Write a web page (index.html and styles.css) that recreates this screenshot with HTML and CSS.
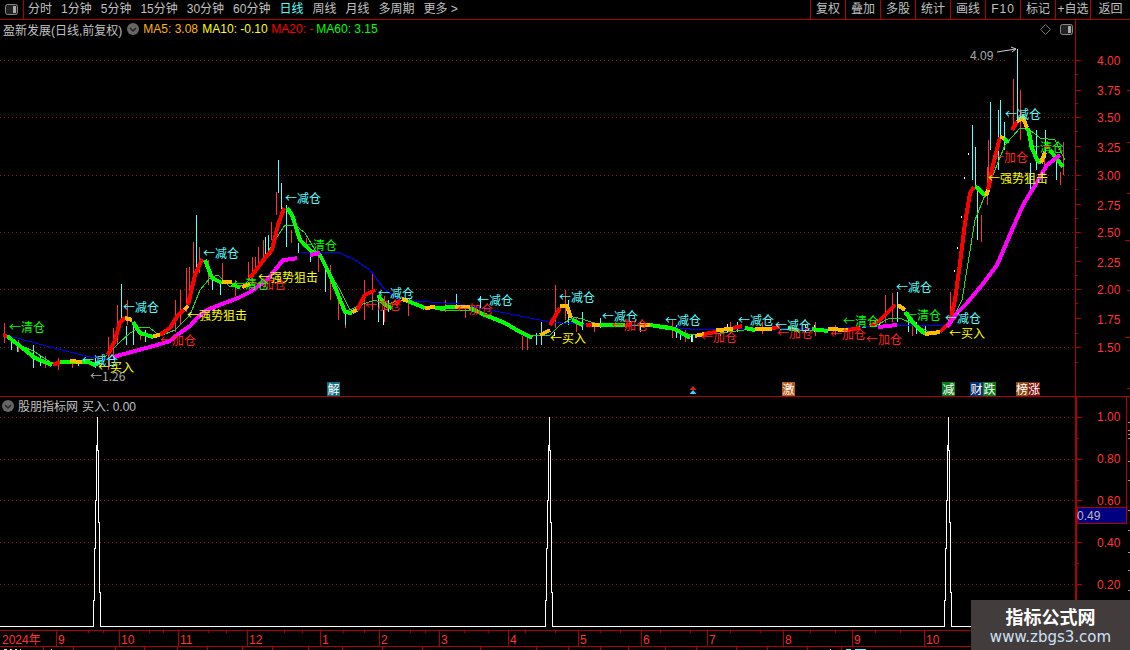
FILE: index.html
```html
<!DOCTYPE html>
<html lang="zh">
<head>
<meta charset="utf-8">
<title>盈新发展 日线</title>
<link rel="stylesheet" href="styles.css">
</head>
<body>
<div class="app">
  <header class="toolbar">
    <div class="toggle-cell">
      <svg class="panel-icon" viewBox="0 0 13 11"><rect x="0.5" y="0.5" width="12" height="10" rx="2" class="panel-frame"/><rect x="8" y="2" width="3" height="7" class="panel-fill"/></svg>
    </div>
    <nav class="periods">
      <span>分时</span><span>1分钟</span><span>5分钟</span><span>15分钟</span><span>30分钟</span><span>60分钟</span><span class="active">日线</span><span>周线</span><span>月线</span><span>多周期</span><span>更多 &gt;</span>
    </nav>
    <nav class="actions">
      <span>复权</span><span>叠加</span><span>多股</span><span>统计</span><span>画线</span><span class="spaced">F10</span><span>标记</span><span>+自选</span><span class="last">返回</span>
    </nav>
  </header>

  <section class="pane pane-main">
    <div class="pane-body">
      <div class="pane-head">
        <span class="title">盈新发展(日线,前复权)</span>
        <svg class="chevron" viewBox="0 0 12 12"><circle cx="6" cy="6" r="6" class="chev-bg"/><path d="M3 5l3 3 3-3" class="chev-mark"/></svg>
        <span class="ma ma5">MA5: 3.08</span>
        <span class="ma ma10">MA10: -0.10</span>
        <span class="ma ma20">MA20: -</span>
        <span class="ma ma60">MA60: 3.15</span>
        <span class="head-tools">
          <svg class="diamond" viewBox="0 0 11 11"><path d="M5.5 0.5l5 5-5 5-5-5z"/></svg>
          <svg class="panel-icon" viewBox="0 0 13 11"><rect x="0.5" y="0.5" width="12" height="10" rx="2" class="panel-frame"/><rect x="8" y="2" width="3" height="7" class="panel-fill"/></svg>
        </span>
      </div>
      <svg class="chart chart-main" viewBox="0 38 1075 358" width="1075" height="358">
        <path class="grid" d="M0 60H1008M1024 60H1075M0 117H1075M0 175H1075M0 232H1075M0 289H1075M0 347H1075"/>

        <path class="wick-red" d="M4 323V343M18 340V352M45 356V368M58 358V370M72 362V368M108 337V370M113 328V360M117 305V345M127 300V325M140 330V340M175 300V332M180 290V325M186 268V312M189 267V300M193 242V277M199 247V273M208 260V285M222 263V280M235 280V296M248 262V280M252 257V275M255 257V272M258 247V270M263 240V257M271 222V240M276 192V215M291 230V243M306 238V247M318 255V272M330 265V300M338 290V320M345 312V328M364 280V320M372 272V310M384 296V322M408 300V316M445 300V312M465 308V318M522 336V350M527 336V350M555 285V328M565 290V320M576 318V332M594 322V332M672 320V338M685 330V342M730 322V334M762 322V334M815 322V336M835 325V335M885 295V323M892 293V322M912 320V336M950 292V326M981 215V242M987 167V205M988 140V190M1013 79V130M1020 90V140M1044 155V175M1060 172V185M1063 142V175"/>
        <path class="wick-cyan" d="M11 340V350M17 345V352M33 345V368M40 355V366M78 360V366M95 358V368M121 284V322M126 326V345M133 322V345M145 330V342M196 215V273M212 274V290M220 280V295M265 237V257M268 235V253M278 160V193M281 183V213M286 205V247M298 243V253M310 250V262M325 268V292M345 312V325M378 296V322M388 300V312M456 294V306M480 296V308M536 333V345M541 322V345M568 300V325M582 312V330M600 318V328M640 322V332M676 325V338M680 330V340M692 335V342M737 322V332M805 324V332M897 292V322M908 320V332M916 322V334M925 326V336M972 125V180M975 147V185M977 190V240M990 102V150M998 110V170M1000 100V140M1004 122V150M1017 49V125M1030 163V190M1036 130V170M1045 130V158M1056 160V180"/>
        <path class="wick-white" d="M383 310V325M554 332V336M691 334V342M727 324V332M879 318V328M958 270V272M968 153V155M964 177V179M961 216V218M957 247V249M954 270V272M720 328V336M814 325V332"/>

        <path class="ma-thin-green" d="M5 337L20 345 35 352 50 362 100 362 120 342 130 333 140 327 150 328 160 336 175 330 190 315 200 290 210 278 218 275 230 287 245 285 262 262 275 240 285 225 295 225 305 233 315 250 325 265 340 290 350 310 360 305 375 300 385 305 400 300 420 306 440 310 470 310 490 318 510 325 530 335 550 335 560 325 575 317 585 320 600 325 640 325 665 325 690 335 720 333 760 328 800 330 840 330 875 326 890 318 900 318 915 325 935 335 950 325 962 300 975 220 985 195 995 170 1005 145 1020 128 1030 130 1040 138 1055 140 1065 160"/>
        <path class="ma-blue" d="M5 335L17 338 50 347 90 357 112 360M300 252L340 253 355 260 370 270 385 290 400 300 460 304 500 312 550 322 590 325 640 324 700 330 760 328 830 329 895 325 950 325"/>

        <path class="ma-green" d="M7 336L25 350 35 358 52 365M60 362L88 362 95 365 100 362M133 322L140 333 153 337M205 260L212 278 222 283M232 284L240 288M287 208L292 215 300 240 312 252 320 255 330 275 345 312 352 313M378 295L385 305 392 308M408 301L425 308M435 308L455 307M470 308L485 315 505 323 520 332 532 338M572 320L583 325M600 325L625 325M650 325L675 329 690 338M745 328L755 330M788 328L800 331M812 329L828 331M905 312L915 325 925 334M975 186L986 196M1004 138L1008 143M1028 128L1032 148 1037 160 1041 163M1050 150L1063 167"/>
        <path class="ma-red" d="M3 335L7 336M53 364L60 363M108 355L115 340 120 322 125 318M160 335L170 328 178 315 184 310M188 305L195 275 202 259M250 278L265 258 272 250 278 225 284 208M357 310L365 295 375 290M395 305L400 300M550 325L560 308M586 325L592 325M625 326L632 324M704 334L716 332M733 328L742 326M772 328L780 327M848 330L860 328M870 326L880 320 895 305M940 332L950 322 955 300 960 263 965 223 970 193 974 187M988 190L993 165 1000 137M1012 130L1017 122M1045 148L1049 145"/>
        <path class="ma-orange" d="M70 361L82 362M125 318L132 320M153 336L160 335M184 310L188 306M222 282L232 282M242 287L250 284M352 312L357 310M402 299L408 301M425 308L435 307M455 307L470 307M540 335L550 330M560 306L567 306 571 318M592 325L600 325M640 325L650 325M695 336L704 334M716 330L733 329M755 329L772 329M828 329L848 330M898 305L905 310M925 334L940 332M986 196L988 190M1000 137L1004 138M1017 122L1023 117 1027 128M1041 163L1045 152"/>
        <path class="ma-magenta" d="M113 357L157 345 170 341 177 335 190 326 197 318 207 310 222 304 238 298 250 292 267 280 283 260 293 259 297 258M310 255L320 253M878 327L897 325M947 327L957 313 967 303 982 285 997 265 1012 230 1023 205 1037 182 1047 165 1060 155"/>

        <path class="white-line" d="M997 52L1016 49M1011 47L1016 49 1012 52"/>
        <text x="970" y="60" class="lbl-grey num">4.09</text>

        <text x="9" y="332" class="lbl lbl-green">←清仓</text>
        <text x="82" y="365" class="lbl lbl-cyan">←减仓</text>
        <text x="90" y="381" class="lbl lbl-grey">←1.26</text>
        <text x="98" y="372" class="lbl lbl-yellow">←买入</text>
        <text x="123" y="312" class="lbl lbl-cyan">←减仓</text>
        <text x="160" y="345" class="lbl lbl-red">←加仓</text>
        <text x="187" y="320" class="lbl lbl-yellow">←强势狙击</text>
        <text x="203" y="258" class="lbl lbl-cyan">←减仓</text>
        <text x="250" y="289" class="lbl lbl-red">←加仓</text>
        <text x="233" y="289" class="lbl lbl-green">←清仓</text>
        <text x="258" y="282" class="lbl lbl-yellow">←强势狙击</text>
        <text x="285" y="203" class="lbl lbl-cyan">←减仓</text>
        <text x="301" y="250" class="lbl lbl-green">←清仓</text>
        <text x="365" y="310" class="lbl lbl-red">←加仓</text>
        <text x="378" y="298" class="lbl lbl-cyan">←减仓</text>
        <text x="457" y="314" class="lbl lbl-red">←加仓</text>
        <text x="477" y="305" class="lbl lbl-cyan">←减仓</text>
        <text x="550" y="343" class="lbl lbl-yellow">←买入</text>
        <text x="559" y="302" class="lbl lbl-cyan">←减仓</text>
        <text x="602" y="321" class="lbl lbl-cyan">←减仓</text>
        <text x="612" y="330" class="lbl lbl-red">←加仓</text>
        <text x="665" y="325" class="lbl lbl-cyan">←减仓</text>
        <text x="701" y="342" class="lbl lbl-red">←加仓</text>
        <text x="738" y="325" class="lbl lbl-cyan">←减仓</text>
        <text x="777" y="338" class="lbl lbl-red">←加仓</text>
        <text x="775" y="330" class="lbl lbl-cyan">←减仓</text>
        <text x="830" y="339" class="lbl lbl-red">←加仓</text>
        <text x="843" y="326" class="lbl lbl-green">←清仓</text>
        <text x="866" y="344" class="lbl lbl-red">←加仓</text>
        <text x="896" y="292" class="lbl lbl-cyan">←减仓</text>
        <text x="905" y="320" class="lbl lbl-green">←清仓</text>
        <text x="945" y="323" class="lbl lbl-cyan">←减仓</text>
        <text x="949" y="338" class="lbl lbl-yellow">←买入</text>
        <text x="992" y="162" class="lbl lbl-red">←加仓</text>
        <text x="988" y="183" class="lbl lbl-yellow">←强势狙击</text>
        <text x="1005" y="119" class="lbl lbl-cyan">←减仓</text>
        <text x="1028" y="152" class="lbl lbl-green">←清仓</text>

        <rect x="327" y="382" width="13" height="14" class="tag-teal"/><text x="327.5" y="393.5" class="tag">解</text>
        <rect x="782" y="382" width="13" height="14" class="tag-orange"/><text x="782.5" y="393.5" class="tag">激</text>
        <rect x="942" y="382" width="13" height="14" class="tag-green"/><text x="942.5" y="393.5" class="tag">减</text>
        <rect x="970" y="382" width="13" height="14" class="tag-navy"/><text x="970.5" y="393.5" class="tag">财</text>
        <rect x="983" y="382" width="13" height="14" class="tag-green"/><text x="983.5" y="393.5" class="tag">跌</text>
        <rect x="1016" y="382" width="12" height="14" class="tag-brown"/><text x="1016" y="393.5" class="tag">榜</text>
        <rect x="1028" y="382" width="12" height="14" class="tag-maroon"/><text x="1028" y="393.5" class="tag">涨</text>
        <path class="tri-red" d="M693 386l3.500 4h-7z"/>
        <path class="tri-cyan" d="M693 390l3.500 4h-7z"/>
      </svg>
    </div>
    <svg class="axis" viewBox="1075 20 55 376" width="55" height="376">
      <path class="axis-line" d="M1075.500 20V396"/>
      <path class="axis-line" d="M1076 60H1081M1076 90H1081M1076 117H1081M1076 146H1081M1076 175H1081M1076 204H1081M1076 232H1081M1076 261H1081M1076 289H1081M1076 318H1081M1076 347H1081M1076 74H1078M1076 103H1078M1076 131H1078M1076 160H1078M1076 189H1078M1076 218H1078M1076 247H1078M1076 275H1078M1076 303H1078M1076 333H1078M1076 362H1078M1127 90H1130M1127 142H1130M1127 193H1130M1125 240H1130M1127 290H1130M1125 337H1130M1127 388H1130"/>
      <text x="1097" y="65" class="axis-num">4.00</text>
      <text x="1097" y="95" class="axis-num">3.75</text>
      <text x="1097" y="122" class="axis-num">3.50</text>
      <text x="1097" y="152" class="axis-num">3.25</text>
      <text x="1097" y="180" class="axis-num">3.00</text>
      <text x="1097" y="210" class="axis-num">2.75</text>
      <text x="1097" y="237" class="axis-num">2.50</text>
      <text x="1097" y="267" class="axis-num">2.25</text>
      <text x="1097" y="294" class="axis-num">2.00</text>
      <text x="1097" y="324" class="axis-num">1.75</text>
      <text x="1097" y="352" class="axis-num">1.50</text>
    </svg>
  </section>

  <section class="pane pane-sub">
    <div class="pane-body">
      <div class="pane-head sub-head">
        <svg class="chevron" viewBox="0 0 12 12"><circle cx="6" cy="6" r="6" class="chev-bg"/><path d="M3 5l3 3 3-3" class="chev-mark"/></svg>
        <span class="title">股朋指标网</span>
        <span class="title">买入: 0.00</span>
      </div>
      <svg class="chart chart-sub" viewBox="0 414 1075 216" width="1075" height="216">
        <path class="grid" d="M0 417H1075M0 459H1075M0 500H1075M0 542H1075M0 584H1075"/>
        <path class="spike" d="M0 626.500H93.500V600H94.500V548H95.500V500H96.500V445H97.500V417V450H98.500V522H99.500V592H100.500V626.500H545.500V600H546.500V548H547.500V500H548.500V445H549.500V417V450H550.500V522H551.500V592H552.500V626.500H944.500V600H945.500V548H946.500V500H947.500V445H948.500V417V450H949.500V522H950.500V592H951.500V626.500H1075"/>
      </svg>
    </div>
    <svg class="axis" viewBox="1075 397 55 233" width="55" height="233">
      <path class="axis-thick" d="M1076 397V630"/>
      <path class="axis-line" d="M1077 417H1082M1077 459H1082M1077 500H1082M1077 542H1082M1077 584H1082M1077 438H1079M1077 480H1079M1077 521H1079M1077 563H1079M1077 605H1079M1126.500 397V507"/>
      <path class="tick-white" d="M1128 422H1130M1128 430H1130M1128 434H1130M1128 438H1130M1128 461H1130M1128 480H1130M1128 510H1130M1128 530H1130M1128 552H1130M1128 570H1130M1128 590H1130M1128 610H1130"/>
      <text x="1097" y="421" class="axis-num">1.00</text>
      <text x="1097" y="463" class="axis-num">0.80</text>
      <text x="1097" y="505" class="axis-num">0.60</text>
      <text x="1097" y="547" class="axis-num">0.40</text>
      <text x="1097" y="589" class="axis-num">0.20</text>
      <rect x="1077.500" y="507.500" width="49" height="16" class="price-box"/>
      <text x="1077" y="520" class="price-text">0.49</text>
    </svg>
  </section>

  <footer class="bottom">
    <svg class="time-axis" viewBox="0 630 1130 20" width="1130" height="20">
      <path class="axis-line" d="M0 630.500H1130M0 646.500H1130M56.500 631V646M119.500 631V646M178.500 631V646M247.500 631V646M320.500 631V646M379.500 631V646M439.500 631V646M508.500 631V646M578.500 631V646M641.500 631V646M707.500 631V646M783.500 631V646M852.500 631V646M924.500 631V646M88.500 631V633M103.500 631V633M149.500 631V633M163.500 631V633M208 631V633M226 631V633M284 631V633M302 631V633M343 631V633M364 631V633M410 631V633M425 631V633M464 631V633M488 631V633M525 631V633M555 631V633M600 631V633M620 631V633M660 631V633M690 631V633M730 631V633M760 631V633M810 631V633M835 631V633M875 631V633M900 631V633M43.500 647V650M73.500 647V650M115.500 647V650M144.500 647V650M177.500 647V650M207.500 647V650M242.500 647V650M272.500 647V650M308.500 647V650M342.500 647V650M382.500 647V650M422.500 647V650M480.500 647V650M536.500 647V650M568.500 647V650M600.500 647V650M628.500 647V650M665.500 647V650M696.500 647V650M736.500 647V650M767.500 647V650M807.500 647V650M841.500 647V650"/>
      <text x="2" y="644" class="axis-num">2024年</text>
      <text x="58" y="644" class="axis-num">9</text>
      <text x="121" y="644" class="axis-num">10</text>
      <text x="180" y="644" class="axis-num">11</text>
      <text x="249" y="644" class="axis-num">12</text>
      <text x="322" y="644" class="axis-num">1</text>
      <text x="381" y="644" class="axis-num">2</text>
      <text x="441" y="644" class="axis-num">3</text>
      <text x="510" y="644" class="axis-num">4</text>
      <text x="580" y="644" class="axis-num">5</text>
      <text x="643" y="644" class="axis-num">6</text>
      <text x="709" y="644" class="axis-num">7</text>
      <text x="785" y="644" class="axis-num">8</text>
      <text x="854" y="644" class="axis-num">9</text>
      <text x="926" y="644" class="axis-num">10</text>
      <path class="sliver" d="M4 649H7M10 649H12M15 649H17M20 649H21M51 649H52M830 649H831"/>
      <path class="sliver sliver-cyan" d="M846 649H851M855 649H866"/>
    </svg>
  </footer>

  <aside class="watermark">
    <strong>指标公式网</strong>
    <span>www.zbgs3.com</span>
  </aside>
</div>
</body>
</html>
```

FILE: styles.css
```css
* { box-sizing: border-box; }
html, body { margin: 0; padding: 0; background: #000; }
body { width: 1130px; height: 650px; overflow: hidden; font-family: "Liberation Sans", "Noto Sans CJK SC", sans-serif; font-size: 12px; color: #c0c0c0; }
svg { display: block; }

.app { position: relative; width: 1130px; height: 650px; display: flex; flex-direction: column; overflow: hidden; }

.toolbar { height: 20px; display: flex; align-items: stretch; border-bottom: 1px solid #b00000; line-height: 19px; flex: none; }
.toggle-cell { width: 24px; border-right: 1px solid #b00000; display: flex; align-items: center; justify-content: center; }
.panel-icon { width: 13px; height: 11px; }
.panel-frame { fill: #222; stroke: #888; }
.panel-fill { fill: #aaa; }
.periods { display: flex; gap: 9px; padding-left: 4px; flex: 1; white-space: nowrap; }
.periods .active { color: #5ff; }
.actions { display: flex; width: 320px; }
.actions span { width: 35px; border-left: 1px solid #b00000; text-align: center; white-space: nowrap; }
.actions .last { width: 40px; }
.actions .spaced { letter-spacing: 1px; }

.pane { display: flex; flex: none; }
.pane-main { height: 377px; border-bottom: 1px solid #b00000; }
.pane-sub { height: 233px; }
.pane-body { width: 1075px; display: flex; flex-direction: column; }
.pane-head { height: 18px; display: flex; align-items: center; padding-left: 3px; white-space: nowrap; flex: none; }
.sub-head { height: 17px; padding-left: 2px; gap: 4px; }
.title { color: #c0c0c0; }
.chevron { width: 12px; height: 12px; margin: 0 4px 0 5px; flex: none; }
.sub-head .chevron { margin: 0; }
.chev-bg { fill: #666; }
.chev-mark { fill: none; stroke: #222; stroke-width: 1.500; }
.ma { margin-right: 5px; }
.ma5 { color: #ffb400; width: 54px; }
.ma10 { color: #ff0; width: 64px; }
.ma20 { color: #f00; width: 40px; }
.ma60 { color: #0f0; }
.head-tools { margin-left: auto; display: flex; align-items: center; gap: 9px; padding-right: 2px; }
.diamond { width: 11px; height: 11px; fill: none; stroke: #777; }

.chart { flex: none; }
.axis { flex: none; }
.grid { fill: none; stroke: #8c1414; stroke-width: 1; stroke-dasharray: 1 3; shape-rendering: crispEdges; }
.wick-red, .wick-cyan, .wick-white { fill: none; stroke-width: 1; shape-rendering: crispEdges; }
.wick-red { stroke: #f33; }
.wick-cyan { stroke: #5ff; }
.wick-white { stroke: #fff; }
.ma-thin-green { fill: none; stroke: #1fdc1f; stroke-width: 1; shape-rendering: crispEdges; }
.ma-blue { fill: none; stroke: #00f; stroke-width: 1; shape-rendering: crispEdges; }
.ma-green, .ma-red, .ma-orange, .ma-magenta { fill: none; stroke-width: 4; stroke-linejoin: round; shape-rendering: crispEdges; }
.ma-green { stroke: #0f0; }
.ma-red { stroke: #f00; }
.ma-orange { stroke: #fb0; }
.ma-magenta { stroke: #f0f; }
.white-line { fill: none; stroke: #ccc; stroke-width: 1; }

.lbl { font-size: 12px; font-family: "Noto Sans CJK SC", "Liberation Sans", sans-serif; font-weight: 400; }
.lbl-green { fill: #0f0; }
.lbl-cyan { fill: #5ff; }
.lbl-red { fill: #f22; }
.lbl-yellow { fill: #ff0; }
.lbl-grey { fill: #aaa; font-size: 12px; }
.tag { font-size: 12px; fill: #fff; font-family: "Noto Sans CJK SC", sans-serif; font-weight: 400; }
.tag-teal { fill: #0f7080; }
.tag-orange { fill: #b85c1c; }
.tag-green { fill: #0a7a1a; }
.tag-navy { fill: #0c3070; }
.tag-brown { fill: #8a4a10; }
.tag-maroon { fill: #7c1010; }
.tri-red { fill: #e02020; }
.tri-cyan { fill: #4cf; }

.axis-line { fill: none; stroke: #b00000; stroke-width: 1; shape-rendering: crispEdges; }
.axis-thick { fill: none; stroke: #b00000; stroke-width: 2; shape-rendering: crispEdges; }
.tick-white { fill: none; stroke: #999; stroke-width: 1; shape-rendering: crispEdges; }
.axis-num { font-size: 12px; fill: #f33; }
.spike { fill: none; stroke: #fff; stroke-width: 1; shape-rendering: crispEdges; }
.price-box { fill: #000080; stroke: #b00000; shape-rendering: crispEdges; }
.price-text { font-size: 12px; fill: #bbb; }
.sliver { fill: none; stroke: #ddd; stroke-width: 1; shape-rendering: crispEdges; }
.sliver-cyan { stroke: #5ff; }

.bottom { height: 20px; flex: none; }

.watermark { position: absolute; right: 0; bottom: 0; width: 159px; height: 50px; background: #423c3c; display: flex; flex-direction: column; align-items: center; justify-content: center; gap: 1px; color: #fff; }
.watermark strong { font-size: 18px; line-height: 22px; font-weight: 700; font-family: "Noto Sans CJK SC", sans-serif; }
.watermark span { font-size: 15px; line-height: 18px; color: #cfe0f5; font-family: "DejaVu Sans", sans-serif; }
```
